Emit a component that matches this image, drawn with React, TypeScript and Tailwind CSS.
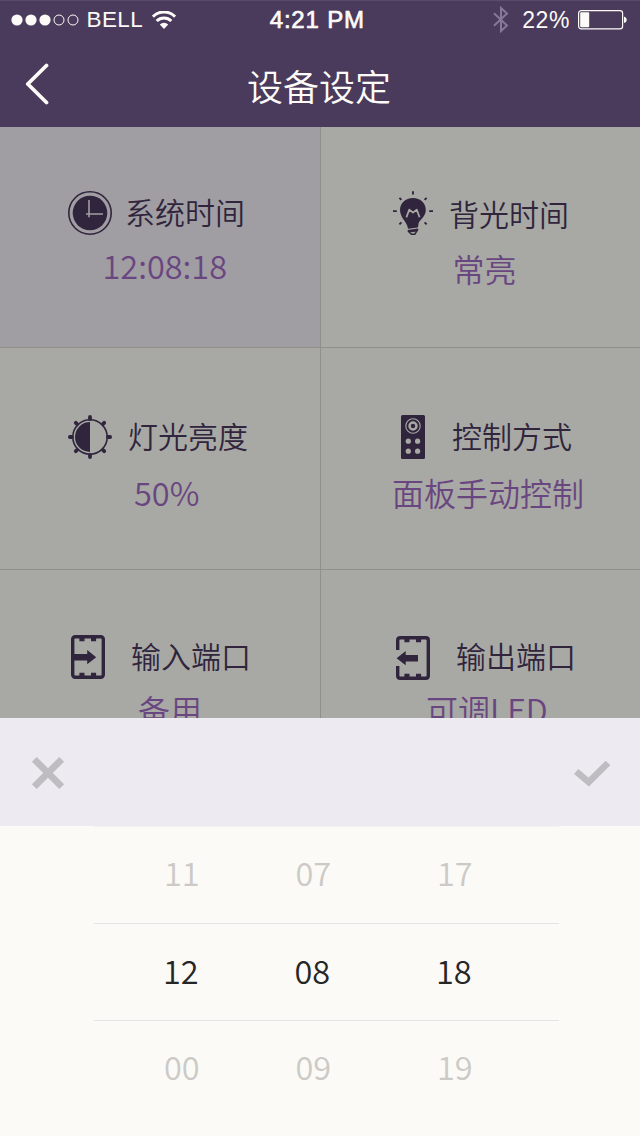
import type { ReactNode } from 'react';

const INK = '#30253d';
const TILE = '#a8a9a4';

function SignalDots() {
  return (
    <svg width="68" height="12" viewBox="0 0 68 12">
      {[0, 1, 2, 3, 4].map((i) => (
        <circle
          key={i}
          cx={6 + i * 14}
          cy="6"
          r={i < 3 ? 5.6 : 5}
          fill={i < 3 ? '#fcfbf7' : 'none'}
          stroke={i < 3 ? 'none' : '#fcfbf7'}
          strokeWidth="1"
        />
      ))}
    </svg>
  );
}

function WifiIcon() {
  return (
    <svg width="24" height="18" viewBox="0 0 24 18" fill="none" stroke="#fcfbf7">
      <path d="M0.9 5.6 A15.6 15.6 0 0 1 23.1 5.6" strokeWidth="3" />
      <path d="M4.7 10 A10.3 10.3 0 0 1 19.3 10" strokeWidth="3" />
      <path d="M12 17.9 L7.8 13.5 A6 6 0 0 1 16.2 13.5 Z" fill="#fcfbf7" stroke="none" />
    </svg>
  );
}

function BluetoothIcon() {
  return (
    <svg width="16" height="27" viewBox="0 0 16 27" fill="none" stroke="#85799a" strokeWidth="2">
      <path d="M1 7.3 L14 19.5 L8 25 V2 L14 7.5 L1 19.7" />
    </svg>
  );
}

function BatteryIcon() {
  return (
    <svg width="49" height="20" viewBox="0 0 49 20">
      <rect x="0.6" y="0.6" width="44" height="18.3" rx="2.6" fill="none" stroke="#fcfbf7" strokeWidth="1.2" />
      <rect x="2.2" y="2.2" width="9" height="15" rx="1" fill="#fcfbf7" />
      <path d="M46 6.5 Q48.8 7.2 48.8 9.7 T46 13 Z" fill="#fcfbf7" />
    </svg>
  );
}

function ClockIcon() {
  return (
    <svg width="44" height="44" viewBox="0 0 44 44">
      <circle cx="22" cy="22" r="21.2" fill="none" stroke={INK} strokeWidth="1.6" />
      <circle cx="22" cy="22" r="17.3" fill={INK} />
      <path d="M21 9 V26.2 M18 23 H35" stroke="#a09ea3" strokeWidth="1.6" fill="none" />
    </svg>
  );
}

function BulbIcon() {
  return (
    <svg width="40" height="44" viewBox="0 0 40 44">
      <path
        d="M20 7 C27.6 7 32.8 12.2 32.8 19 C32.8 25.5 27 28.5 25.6 32 Q25.2 36.2 24.6 36.4 L15 37.8 C14.3 30.5 7 27.2 7 19 C7 12.2 12.4 7 20 7 Z"
        fill={INK}
      />
      <path d="M13.4 26.4 L16.3 18.6 L20 21.6 L23.7 18.6 L26.6 26.3" fill="none" stroke={TILE} strokeWidth="1.7" strokeLinejoin="round" />
      <path d="M14.8 39.8 L25.2 38.2 M15.8 40.8 L24 39.8 L21.8 43.2 H18.4 Z" fill="none" stroke={INK} strokeWidth="1.4" />
      <path
        d="M20 0.2 V3.6 M0 20.1 H3.8 M36.2 20.1 H40 M6.4 6.8 L8.4 8.8 M33.6 6.8 L31.6 8.8 M6.4 33.4 L8.4 31.4 M33.6 33.4 L31.6 31.4"
        stroke={INK}
        strokeWidth="1.9"
      />
    </svg>
  );
}

function BrightnessIcon() {
  return (
    <svg width="44" height="44" viewBox="0 0 44 44">
      <circle cx="22" cy="22" r="17.2" fill="none" stroke={INK} strokeWidth="1.6" />
      <path d="M22 7 V37 A15 15 0 0 1 22 7 Z" fill={INK} />
      <path
        d="M22 1.9 V4 M22 40 V42.1 M1.9 22 H4 M40 22 H42.1 M7.8 7.8 L9 9 M36.2 7.8 L35 9 M7.8 36.2 L9 35 M36.2 36.2 L35 35"
        stroke={INK}
        strokeWidth="3.8"
        strokeLinecap="round"
      />
    </svg>
  );
}

function RemoteIcon() {
  return (
    <svg width="24" height="44" viewBox="0 0 24 44">
      <rect width="24" height="44" rx="1.6" fill={INK} />
      <circle cx="12" cy="11" r="7.2" fill="none" stroke={TILE} strokeWidth="1.1" />
      <circle cx="12" cy="11" r="3.5" fill="none" stroke={TILE} strokeWidth="2.4" />
      <g fill={TILE}>
        <circle cx="7.3" cy="26.2" r="2.6" />
        <circle cx="16.6" cy="26.2" r="2.6" />
        <circle cx="7.3" cy="36.2" r="2.6" />
        <circle cx="16.6" cy="36.2" r="2.6" />
      </g>
    </svg>
  );
}

function InputPortIcon() {
  return (
    <svg width="34" height="44" viewBox="0 0 34 44">
      <rect x="1.7" y="1.7" width="30.6" height="40.6" rx="2.5" fill="none" stroke={INK} strokeWidth="3.4" />
      <path d="M8.4 2 H13.5 V6.2 H8.4 Z M20 2 H25.1 V6.2 H20 Z M8.4 42 H13.5 V37.8 H8.4 Z M20 42 H25.1 V37.8 H20 Z" fill={INK} />
      <path d="M1 19 H16.2 V15 L25.2 22.2 L16.2 29.3 V25.4 H1 Z" fill={INK} />
    </svg>
  );
}

function OutputPortIcon() {
  return (
    <svg width="34" height="44" viewBox="0 0 34 44">
      <path
        d="M1.7 14 V4.2 Q1.7 1.7 4.2 1.7 H29.8 Q32.3 1.7 32.3 4.2 V39.8 Q32.3 42.3 29.8 42.3 H4.2 Q1.7 42.3 1.7 39.8 V30"
        fill="none"
        stroke={INK}
        strokeWidth="3.4"
      />
      <path d="M8.4 2 H13.5 V6.2 H8.4 Z M20 2 H25.1 V6.2 H20 Z M8.4 42 H13.5 V37.8 H8.4 Z M20 42 H25.1 V37.8 H20 Z" fill={INK} />
      <path d="M22 19 H9.7 V15 L0.6 22.2 L9.7 29.3 V25.4 H22 Z" fill={INK} />
    </svg>
  );
}

type TileProps = {
  className: string;
  rowClass: string;
  labelClass: string;
  valueClass: string;
  icon: ReactNode;
  label: string;
  value: string;
};

function Tile({ className, rowClass, labelClass, valueClass, icon, label, value }: TileProps) {
  return (
    <div className={`flex flex-col border-[#8f908c] ${className}`}>
      <div className={`flex h-11 items-start ${rowClass}`}>
        {icon}
        <span className={`text-[30px] whitespace-nowrap text-[#30253d] ${labelClass}`}>{label}</span>
      </div>
      <div className={`leading-[40px] whitespace-nowrap text-[#6a4681] ${valueClass}`}>{value}</div>
    </div>
  );
}

function PickerRow({ values, className }: { values: string[]; className: string }) {
  return (
    <div className={`flex border-t text-[32.5px] leading-[48px] ${className}`}>
      <span className="w-[131.5px]">{values[0]}</span>
      <span className="w-[141.5px]">{values[1]}</span>
      <span>{values[2]}</span>
    </div>
  );
}

export default function App() {
  return (
    <div className="flex h-[1136px] w-[640px] flex-col overflow-hidden bg-[#fbfaf6] font-['Noto_Sans_CJK_SC',sans-serif] font-[350]">
      <header className="h-[127px] shrink-0 border-t border-[#5a4a6b] bg-[#4a3a5c] text-[#fcfbf7]">
        <div className="flex h-[38px] items-center justify-between pr-[13px] pl-[10.5px] font-['Liberation_Sans',sans-serif] font-normal">
          <div className="flex w-[257px] items-center">
            <SignalDots />
            <span className="ml-[8px] text-[22.5px] leading-none tracking-[0.4px]">BELL</span>
            <span className="ml-[8.5px]">
              <WifiIcon />
            </span>
          </div>
          <span className="text-[24px] leading-none tracking-[0.8px] [-webkit-text-stroke:0.7px_#fcfbf7]">4:21 PM</span>
          <div className="flex w-[260px] items-center justify-end">
            <span className="-mt-[2px]">
              <BluetoothIcon />
            </span>
            <span className="ml-[13px] text-[23px] leading-none tracking-[0.6px]">22%</span>
            <span className="ml-[8px]">
              <BatteryIcon />
            </span>
          </div>
        </div>
        <div className="flex h-[88px] items-start">
          <svg className="mt-[24px] ml-[24px]" width="26" height="42" viewBox="0 0 26 42">
            <path d="M22.5 2.5 L3.8 21 L22.5 39.5" fill="none" stroke="#fcfbf7" strokeWidth="3.8" strokeLinecap="round" strokeLinejoin="round" />
          </svg>
          <h1 className="mt-[21px] ml-[197px] text-[36px] leading-[50px] font-[350]">设备设定</h1>
        </div>
      </header>

      <main className="grid h-[591px] shrink-0 grid-cols-[321px_319px] grid-rows-[221px_222px_148px] overflow-hidden bg-[#a8a9a4]">
        <Tile
          className="border-r border-b bg-[#a09ea3]"
          rowClass="pt-[64px] pl-[68px] box-content"
          icon={<ClockIcon />}
          label="系统时间"
          labelClass="ml-[13px] leading-[40px]"
          value="12:08:18"
          valueClass="mt-[10px] pl-[102.5px] text-[32.5px]"
        />
        <Tile
          className="border-b"
          rowClass="pt-[64px] pl-[72px] box-content"
          icon={<BulbIcon />}
          label="背光时间"
          labelClass="ml-[16px] leading-[44px]"
          value="常亮"
          valueClass="mt-[13px] pl-[131.5px] text-[32px]"
        />
        <Tile
          className="border-r border-b"
          rowClass="pt-[67px] pl-[68px] box-content"
          icon={<BrightnessIcon />}
          label="灯光亮度"
          labelClass="ml-[16px] leading-[40px]"
          value="50%"
          valueClass="mt-[13px] pl-[134px] text-[32.5px]"
        />
        <Tile
          className="border-b"
          rowClass="pt-[67px] pl-[80px] box-content"
          icon={<RemoteIcon />}
          label="控制方式"
          labelClass="ml-[27px] leading-[40px]"
          value="面板手动控制"
          valueClass="mt-[13px] pl-[71px] text-[32px]"
        />
        <Tile
          className="border-r"
          rowClass="pt-[65px] pl-[71px] box-content"
          icon={<InputPortIcon />}
          label="输入端口"
          labelClass="ml-[26px] leading-[40px]"
          value="备用"
          valueClass="mt-[10px] pl-[138px] text-[32px]"
        />
        <Tile
          className=""
          rowClass="pt-[66px] pl-[75px] box-content"
          icon={<OutputPortIcon />}
          label="输出端口"
          labelClass="ml-[26px] leading-[38px]"
          value="可调LED"
          valueClass="mt-[9px] pl-[105px] text-[32px]"
        />
      </main>

      <section className="flex h-[108px] shrink-0 items-center justify-between bg-[#edeaf1] pt-[2px] pr-[29px] pl-[31px]">
        <svg width="34" height="34" viewBox="0 0 34 34">
          <path d="M3.3 3.3 L30.7 30.7 M30.7 3.3 L3.3 30.7" stroke="#bfbdc1" strokeWidth="6.8" />
        </svg>
        <svg className="mt-[2px]" width="38" height="28" viewBox="0 0 38 28">
          <path d="M3.2 11.5 L15.7 22 L35 3" fill="none" stroke="#bfbdc1" strokeWidth="6.6" />
        </svg>
      </section>

      <section className="flex flex-1 flex-col pr-[81px] pl-[94px]">
        <PickerRow values={['11', '07', '17']} className="h-[97px] border-[#f2f0f3] pt-[21px] pl-[70px] text-[#cbcac6]" />
        <PickerRow values={['12', '08', '18']} className="h-[97px] border-[#e4e4e6] pt-[22px] pl-[69px] text-[#262626]" />
        <PickerRow values={['00', '09', '19']} className="h-[97px] border-[#e4e4e6] pt-[21px] pl-[70px] text-[#cbcac6]" />
      </section>
    </div>
  );
}
